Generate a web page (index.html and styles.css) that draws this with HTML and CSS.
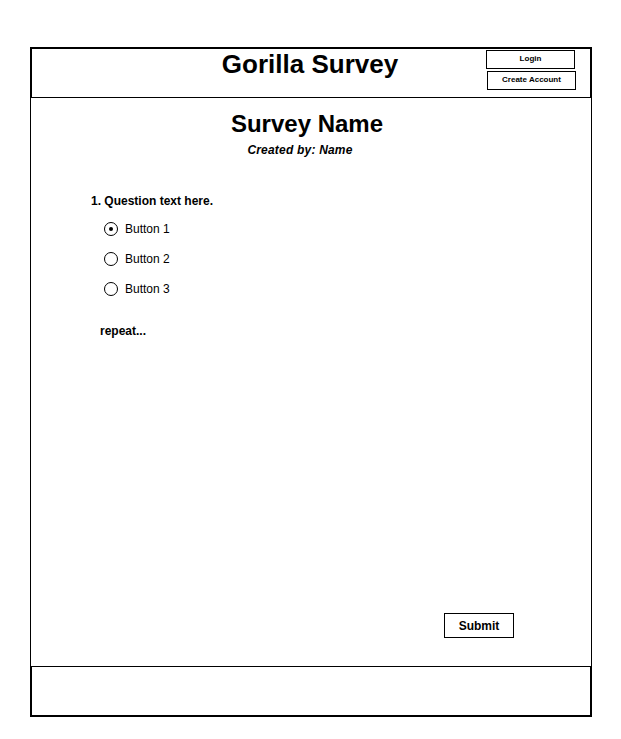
FILE: index.html
```html
<!DOCTYPE html>
<html>
<head>
<meta charset="utf-8">
<link rel="stylesheet" href="styles.css">
</head>
<body>
<div class="page">
  <header class="header">
    <div class="spacer"></div>
    <h1 class="site-title">Gorilla Survey</h1>
    <div class="account">
      <div class="btn-small login">Login</div>
      <div class="btn-small create">Create Account</div>
    </div>
  </header>
  <main class="main">
    <div class="survey-head">
      <h2 class="survey-name">Survey Name</h2>
      <div class="created">Created by: Name</div>
    </div>
    <div class="question">
      <div class="q-text">1. Question text here.</div>
      <div class="options">
        <div class="option"><span class="radio checked"></span><span>Button 1</span></div>
        <div class="option"><span class="radio"></span><span>Button 2</span></div>
        <div class="option"><span class="radio"></span><span>Button 3</span></div>
      </div>
      <div class="repeat">repeat...</div>
    </div>
    <div class="submit-row">
      <div class="submit">Submit</div>
    </div>
  </main>
  <footer class="footer"></footer>
</div>
</body>
</html>
```
FILE: styles.css
```css
* { box-sizing: border-box; }
body {
  margin: 0;
  background: #fff;
  font-family: "Liberation Sans", Arial, sans-serif;
  color: #000;
}
.page {
  margin: 47px 0 0 30px;
  width: 562px;
}
.header {
  height: 51px;
  border: 2px solid #000;
  border-bottom: 1px solid #000;
  display: grid;
  grid-template-columns: 1fr auto 1fr;
  align-items: start;
}
.site-title {
  margin: 0;
  padding-top: 0;
  padding-right: 2px;
  font-size: 26px;
  font-weight: bold;
  line-height: 30px;
  text-align: center;
}
.account {
  justify-self: end;
  display: flex;
  flex-direction: column;
  gap: 2px;
  padding-top: 1px;
  padding-right: 14px;
}
.btn-small {
  width: 89px;
  height: 19px;
  border: 1px solid #000;
  font-size: 8px;
  font-weight: bold;
  display: flex;
  align-items: center;
  justify-content: center;
  padding-bottom: 2px;
}
.login { margin-right: 1px; }
.create { margin-left: 1px; }
.main {
  height: 568px;
  border-left: 1px solid #000;
  border-right: 1px solid #000;
  display: flex;
  flex-direction: column;
}
.survey-head {
  padding-top: 12px;
  display: flex;
  flex-direction: column;
  align-items: center;
  padding-right: 8px;
}
.survey-name {
  margin: 0;
  font-size: 24px;
  font-weight: bold;
  line-height: 28px;
}
.created {
  margin-top: 5px;
  font-size: 12px;
  font-weight: bold;
  font-style: italic;
  padding-right: 14px;
  letter-spacing: 0.2px;
}
.question {
  padding-left: 60px;
  padding-top: 36px;
}
.q-text {
  font-size: 12px;
  font-weight: bold;
  line-height: 16px;
}
.options {
  margin-top: 12px;
  padding-left: 13px;
  display: flex;
  flex-direction: column;
  gap: 14px;
}
.option {
  display: flex;
  align-items: center;
  gap: 7px;
  font-size: 12px;
  line-height: 16px;
}
.radio {
  width: 14px;
  height: 14px;
  border: 1.4px solid #000;
  border-radius: 50%;
  display: flex;
  align-items: center;
  justify-content: center;
}
.radio.checked::after {
  content: "";
  width: 4px;
  height: 4px;
  border-radius: 50%;
  background: #000;
}
.repeat {
  margin-top: 26px;
  padding-left: 9px;
  font-size: 12px;
  font-weight: bold;
  line-height: 16px;
}
.submit-row {
  margin-top: auto;
  margin-bottom: 28px;
  display: flex;
  justify-content: flex-end;
  padding-right: 77px;
}
.submit {
  width: 70px;
  height: 25px;
  border: 1px solid #000;
  font-size: 12px;
  font-weight: bold;
  display: flex;
  align-items: center;
  justify-content: center;
}
.footer {
  height: 51px;
  border: 2px solid #000;
  border-top: 1px solid #000;
}
```
